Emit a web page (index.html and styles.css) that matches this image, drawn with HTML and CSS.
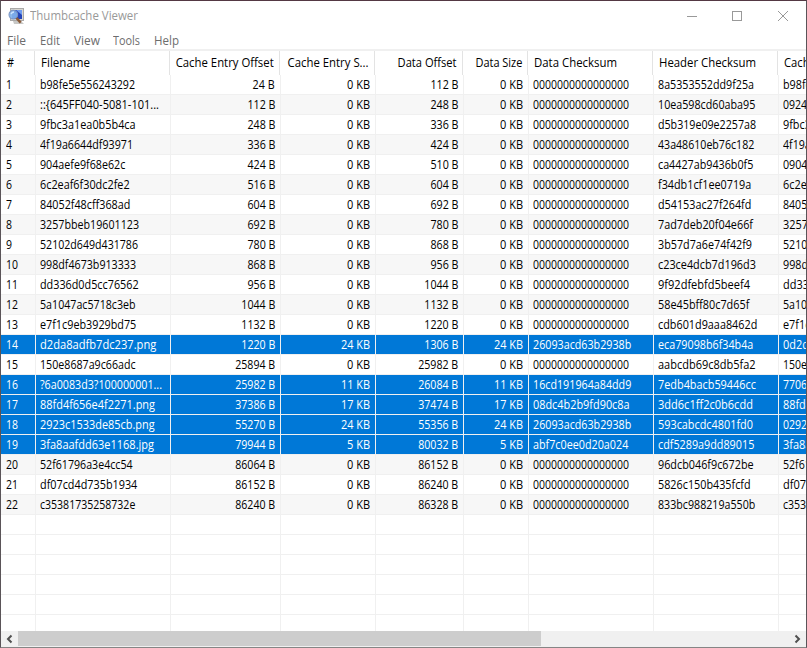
FILE: index.html
```html
<!DOCTYPE html>
<html lang="en">
<head>
<meta charset="utf-8">
<title>Thumbcache Viewer</title>
<link rel="stylesheet" href="styles.css">
</head>
<body>
<div class="window">
  <header class="titlebar">
    <svg class="app-icon" width="17" height="17" viewBox="0 0 17 17">
      <path d="M5 13h8l3 3H6z" fill="#c8c8c6"/>
      <rect x="2.500" y=".5" width="13" height="12" fill="#d8d6d0" stroke="#aaa9a8"/>
      <rect x="4" y="2" width="10" height="9" fill="#2444b8"/>
      <path d="M8 2h6v5z" fill="#6f9cf0"/>
      <circle cx="5.300" cy="6.700" r="4.300" fill="#84b6ee" fill-opacity=".9" stroke="#7c96c4" stroke-width="1.100"/>
      <path d="M3 6q1-2 3-2" fill="none" stroke="#cfe5ff" stroke-width="1.300"/>
      <path d="M8.500 10l4.200 4.700" stroke="#8a5a38" stroke-width="2.600"/>
    </svg>
    <span class="title" data-width="108">Thumbcache Viewer</span>
    <svg class="controls" width="119" height="30" viewBox="0 0 119 30" fill="none" stroke="#999" shape-rendering="crispEdges">
      <path d="M0 15.500H10M45.500 10.500h9v9h-9z"/>
      <path d="M91 10l10 10M101 10l-10 10" shape-rendering="auto"/>
    </svg>
  </header>
  <nav class="menu">
    <div class="file"><span data-width="19">File</span></div>
    <div class="edit"><span data-width="20">Edit</span></div>
    <div class="view"><span data-width="26">View</span></div>
    <div class="tools"><span data-width="27">Tools</span></div>
    <div class="help"><span data-width="25">Help</span></div>
  </nav>
  <main class="list">
    <div class="row head">
      <div><span data-width="7">#</span></div>
      <div><span data-width="49">Filename</span></div>
      <div class="num"><span data-width="98">Cache Entry Offset</span></div>
      <div class="num"><span data-width="81">Cache Entry S...</span></div>
      <div class="num"><span data-width="59">Data Offset</span></div>
      <div class="num"><span data-width="47">Data Size</span></div>
      <div><span data-width="83">Data Checksum</span></div>
      <div><span data-width="97">Header Checksum</span></div>
      <div><span data-width="89">Cache Checksum</span></div>
    </div>
    <div class="body" id="rows"></div>
  </main>
  <footer class="scrollbar">
    <svg width="17" height="16" viewBox="0 0 17 16"><path d="M10.500 4.500L7 8l3.500 3.500" fill="none" stroke="#505050" stroke-width="2"/></svg>
    <div class="track"><div class="thumb"></div></div>
    <svg width="17" height="16" viewBox="0 0 17 16"><path d="M6.500 4.500L10 8l-3.500 3.500" fill="none" stroke="#505050" stroke-width="2"/></svg>
  </footer>
</div>
<script src="app.js"></script>
</body>
</html>
```
FILE: styles.css
```css
* { box-sizing: border-box; }
body {
  margin: 0;
  font: 12px/18px "Open Sans", "Noto Sans", sans-serif;
  color: #000;
  overflow: hidden;
}
span {
  display: inline-block;
  white-space: pre;
  transform-origin: left center;
}
.window {
  width: 807px;
  height: 648px;
  display: flex;
  flex-direction: column;
  background: #fff;
  border: 1px solid #5a5458;
  border-top-color: #543843;
  border-bottom-color: #858585;
  overflow: hidden;
}
.titlebar {
  height: 30px;
  flex: none;
  display: flex;
  align-items: center;
  padding-left: 7px;
  color: #999;
}
.app-icon { margin-right: 5px; }
.controls { margin-left: auto; }
.menu {
  height: 20px;
  flex: none;
  display: grid;
  grid-template-columns: 33px 34px 39px 41px 40px;
  padding: 1px 0 0 6px;
  color: #6d6d6d;
  border-bottom: 2px solid #f0f0f0;
}
.list {
  flex: 1;
  min-height: 0;
  overflow: hidden;
  display: flex;
  flex-direction: column;
}
.row {
  display: grid;
  grid-template-columns: 35px 135px 110px 95px 88px 65px 125px 125px 125px;
  width: 903px;
  height: 20px;
  flex: none;
}
.row > div {
  padding: 1px 4px 0;
  border-right: 1px solid #f0f0f0;
  border-bottom: 1px solid #f0f0f0;
  overflow: hidden;
}
.row > div:first-child { padding-left: 5px; }
.row > .num {
  display: flex;
  justify-content: flex-end;
  padding-right: 5px;
}
.num span { transform-origin: right center; }
.row:nth-child(even) { background: #f7f7f7; }
.row.head {
  height: 24px;
  grid-template-columns: 34px 135px 110px 95px 88px 65px 125px 125px 125px;
  width: 902px;
}
.row.head > div {
  padding: 3px 5px 0 6px;
  border-bottom: 0;
  border-right-color: #e3e3e3;
}
.row.selected > div {
  background: #0078d7;
  background-clip: padding-box;
  color: #fff;
}
.body { flex: 1; min-height: 0; overflow: hidden; }
.row.empty { background: #fff; }
.scrollbar {
  height: 16px;
  flex: none;
  display: flex;
  background: #f0f0f0;
}
.track { flex: 1; }
.thumb { width: 523px; height: 15px; background: #cdcdcd; }
```
FILE: app.js
```js
// name, entry offset, entry size, data offset, data checksum, header checksum, next column, selected
const Z = '0000000000000000';
const entries = [
  ['b98fe5e556243292', 24, 0, 112, Z, '8a5353552dd9f25a', 'b98fe5e5'],
  ['::{645FF040-5081-101...', 112, 0, 248, Z, '10ea598cd60aba95', '09240000'],
  ['9fbc3a1ea0b5b4ca', 248, 0, 336, Z, 'd5b319e09e2257a8', '9fbc3a1e'],
  ['4f19a6644df93971', 336, 0, 424, Z, '43a48610eb76c182', '4f19a664'],
  ['904aefe9f68e62c', 424, 0, 510, Z, 'ca4427ab9436b0f5', '0904aefe'],
  ['6c2eaf6f30dc2fe2', 516, 0, 604, Z, 'f34db1cf1ee0719a', '6c2eaf6f'],
  ['84052f48cff368ad', 604, 0, 692, Z, 'd54153ac27f264fd', '84052f48'],
  ['3257bbeb19601123', 692, 0, 780, Z, '7ad7deb20f04e66f', '3257bbeb'],
  ['52102d649d431786', 780, 0, 868, Z, '3b57d7a6e74f42f9', '52102d64'],
  ['998df4673b913333', 868, 0, 956, Z, 'c23ce4dcb7d196d3', '998df467'],
  ['dd336d0d5cc76562', 956, 0, 1044, Z, '9f92dfebfd5beef4', 'dd336d0d'],
  ['5a1047ac5718c3eb', 1044, 0, 1132, Z, '58e45bff80c7d65f', '5a1047ac'],
  ['e7f1c9eb3929bd75', 1132, 0, 1220, Z, 'cdb601d9aaa8462d', 'e7f1c9eb'],
  ['d2da8adfb7dc237.png', 1220, 24, 1306, '26093acd63b2938b', 'eca79098b6f34b4a', '0d2da8ad', 1],
  ['150e8687a9c66adc', 25894, 0, 25982, Z, 'aabcdb69c8db5fa2', '150e8687'],
  ['?6a0083d3?100000001...', 25982, 11, 26084, '16cd191964a84dd9', '7edb4bacb59446cc', '77060000', 1],
  ['88fd4f656e4f2271.png', 37386, 17, 37474, '08dc4b2b9fd90c8a', '3dd6c1ff2c0b6cdd', '88fd4f65', 1],
  ['2923c1533de85cb.png', 55270, 24, 55356, '26093acd63b2938b', '593cabcdc4801fd0', '02923c15', 1],
  ['3fa8aafdd63e1168.jpg', 79944, 5, 80032, 'abf7c0ee0d20a024', 'cdf5289a9dd89015', '3fa8aafd', 1],
  ['52f61796a3e4cc54', 86064, 0, 86152, Z, '96dcb046f9c672be', '52f61796'],
  ['df07cd4d735b1934', 86152, 0, 86240, Z, '5826c150b435fcfd', 'df07cd4d'],
  ['c35381735258732e', 86240, 0, 86328, Z, '833bc988219a550b', 'c3538173']
];

const advance = { b: 7, d: 7, p: 7, n: 7, g: 7, c: 5.3, f: 4, '.': 3, j: 3, ' ': 3, K: 7, B: 7, ':': 3, '{': 4, '-': 5, '?': 5 };
const widthOf = text => [...text].reduce((w, ch) => w + (advance[ch] || 6), 0);

const cell = (text, num) => `<div${num ? ' class="num"' : ''}><span data-width="${widthOf(text)}">${text}</span></div>`;
let html = entries.map((e, i) =>
  `<div class="row${e[7] ? ' selected' : ''}">` + cell(String(i + 1)) + cell(e[0]) +
  cell(e[1] + ' B', 1) + cell(e[2] + ' KB', 1) + cell(e[3] + ' B', 1) + cell(e[2] + ' KB', 1) +
  cell(e[4]) + cell(e[5]) + cell(e[6]) + '</div>').join('');
for (let i = 0; i < 6; i++) html += '<div class="row empty">' + '<div></div>'.repeat(9) + '</div>';
document.getElementById('rows').innerHTML = html;

for (const el of document.querySelectorAll('[data-width]')) {
  const target = Number(el.dataset.width);
  const actual = el.getBoundingClientRect().width;
  el.style.transform = `scaleX(${target / actual})`;
}
```
